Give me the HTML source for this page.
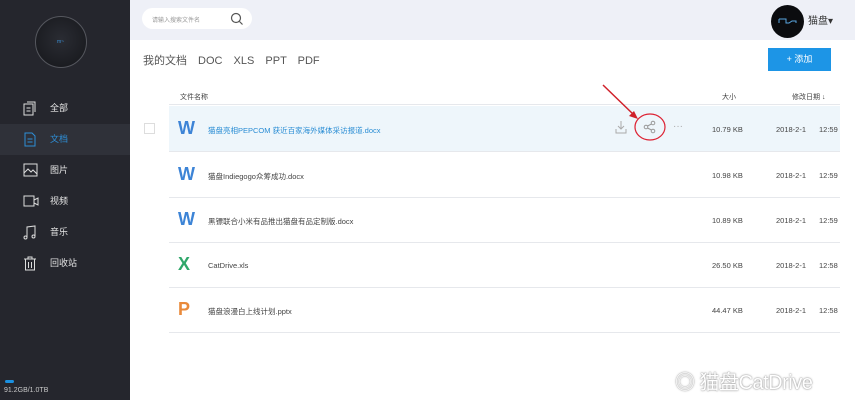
<!DOCTYPE html>
<html><head><meta charset="utf-8"><style>
*{margin:0;padding:0;box-sizing:border-box}
body{width:855px;height:400px;overflow:hidden;background:#fff;font-family:"Liberation Sans","Noto Sans CJK SC",sans-serif;position:relative}
.side{position:absolute;left:0;top:0;width:130px;height:400px;background:#25262d}
.avatar{position:absolute;left:35px;top:16px;width:52px;height:52px;border-radius:50%;border:1px solid #55575e;background:radial-gradient(circle at 50% 45%,#2a2c33,#15161a)}
.avatar span{position:absolute;left:21px;top:22px;color:#3a8fd6;font-size:5px}
.nav{position:absolute;left:0;width:130px;height:31px;color:#e6e6e6;font-size:9px;line-height:31px}
.nav svg{position:absolute;left:23px;top:8px}
.nav b{position:absolute;left:50px;font-weight:normal}
.nav.act{background:#2f3139;color:#2e8fd8}
.bar{position:absolute;left:5px;top:380px;width:9px;height:3px;background:#1a90e0;border-radius:2px}
.quota{position:absolute;left:4px;top:387px;color:#c8c8c8;font-size:7px}
.top{position:absolute;left:130px;top:0;width:725px;height:40px;background:#eef0f7}
.search{position:absolute;left:12px;top:8px;width:110px;height:21px;background:#fff;border-radius:11px;font-size:6px;color:#999;padding:7px 0 0 10px}
.uav{position:absolute;left:641px;top:5px;width:33px;height:33px;border-radius:50%;background:#0b0c0f}
.uname{position:absolute;left:678px;top:12px;font-size:10px;color:#333}
.tabs{position:absolute;left:143px;top:52px;font-size:11px;color:#555;word-spacing:8px}
.add{position:absolute;left:768px;top:48px;width:63px;height:23px;background:#1d95e6;color:#fff;font-size:9px;text-align:center;line-height:23px}
.hd{position:absolute;top:92px;font-size:7px;color:#444}
.row{position:absolute;left:169px;width:671px;height:46px;border-bottom:1px solid #e6e8ec;font-size:7.5px;color:#444}
.row.hl{background:#eef6fb}
.row .ic{position:absolute;left:9px;top:12px;font-size:18px;font-weight:bold}
.row .nm{position:absolute;left:39px;top:19px}
.row .sz{position:absolute;left:543px;top:19px}
.row .dt{position:absolute;left:607px;top:19px}
.row .tm{position:absolute;left:650px;top:19px}
.wm{position:absolute;left:675px;top:366px;font-size:20px;color:#fff;text-shadow:0 0 2px #999,0 0 1px #888;letter-spacing:-0.5px}
</style></head><body>
<div class="side">
<div class="avatar"><span>m~</span></div>
<div class="nav" style="top:93px"><svg width="14" height="15" fill="none" stroke="#ddd"><rect x="1" y="3" width="9" height="11"/><path d="M4 1h8v10"/><path d="M3.5 7h4M3.5 10h4"/></svg><b>全部</b></div>
<div class="nav act" style="top:124px"><svg width="14" height="15" fill="none" stroke="#2e8fd8"><path d="M2 1h7l3 3v10H2z"/><path d="M4.5 7h5M4.5 10h5"/></svg><b>文档</b></div>
<div class="nav" style="top:155px"><svg width="15" height="14" fill="none" stroke="#ddd"><rect x="1" y="1" width="13" height="12"/><path d="M1 10l4-4 3 3 2-2 4 4"/></svg><b>图片</b></div>
<div class="nav" style="top:186px"><svg width="16" height="14" fill="none" stroke="#ddd"><rect x="1" y="2" width="10" height="10"/><path d="M11 6l4-2v7l-4-2"/></svg><b>视频</b></div>
<div class="nav" style="top:217px"><svg width="14" height="15" fill="none" stroke="#ddd"><path d="M4 12V2l8-1v10"/><circle cx="2.5" cy="12.5" r="1.5"/><circle cx="10.5" cy="11.5" r="1.5"/></svg><b>音乐</b></div>
<div class="nav" style="top:248px"><svg width="14" height="15" fill="none" stroke="#ddd"><path d="M1 3h12M5 3V1h4v2M2.5 3v11h9V3M5.5 6v6M8.5 6v6"/></svg><b>回收站</b></div>
<div class="bar"></div><div class="quota">91.2GB/1.0TB</div>
</div>
<div class="top"><div class="search">请输入搜索文件名<svg style="position:absolute;left:88px;top:4px" width="13" height="13" fill="none" stroke="#555" stroke-width="1.2"><circle cx="6" cy="6" r="4.5"/><path d="M9.5 9.5l3 3"/></svg></div>
<div class="uav"><svg width="33" height="33" fill="none" stroke="#5aa6e0"><path d="M8 14v4M8 14h7v4h3l3 -2h4v2"/></svg></div><div class="uname">猫盘▾</div></div>
<div class="tabs">我的文档 DOC XLS PPT PDF</div>
<div class="add">+ 添加</div>
<div class="hd" style="left:180px">文件名称</div><div class="hd" style="left:722px">大小</div><div class="hd" style="left:792px">修改日期 ↓</div>
<div style="position:absolute;left:169px;top:104px;width:671px;border-top:1px solid #e6e8ec"></div>
<div class="row hl" style="top:106px"><div style="position:absolute;left:-25px;top:17px;width:11px;height:11px;border:1px solid #ddd;background:#fff"></div><div class="ic" style="color:#3d84d6">W</div><div class="nm" style="color:#2a8dd4">猫盘亮相PEPCOM 获近百家海外媒体采访报道.docx</div>
<svg style="position:absolute;left:446px;top:14px" width="12" height="14" fill="none" stroke="#aaa"><path d="M6 1v8M3 6l3 3 3-3M1 9v4h10V9"/></svg>
<svg style="position:absolute;left:464px;top:6px" width="34" height="30" fill="none"><ellipse cx="17" cy="15" rx="15" ry="13" stroke="#d23" stroke-width="1.2"/><circle cx="13" cy="15" r="1.8" stroke="#999"/><circle cx="20" cy="11" r="1.8" stroke="#999"/><circle cx="20" cy="19" r="1.8" stroke="#999"/><path d="M14.5 14l4-2M14.5 16l4 2" stroke="#999"/></svg>
<div style="position:absolute;left:504px;top:15px;color:#aaa;font-size:10px">···</div>
<div class="sz">10.79 KB</div><div class="dt">2018-2-1</div><div class="tm">12:59</div></div>
<svg style="position:absolute;left:600px;top:82px" width="40" height="40"><path d="M3 3L34 33" stroke="#d0202a" stroke-width="1.5"/><path d="M38 37l-9-3 5-5z" fill="#d0202a"/></svg>
<div class="row" style="top:152px"><div class="ic" style="color:#3d84d6">W</div><div class="nm">猫盘Indiegogo众筹成功.docx</div><div class="sz">10.98 KB</div><div class="dt">2018-2-1</div><div class="tm">12:59</div></div>
<div class="row" style="top:197px"><div class="ic" style="color:#3d84d6">W</div><div class="nm">黑镖联合小米有品推出猫盘有品定制版.docx</div><div class="sz">10.89 KB</div><div class="dt">2018-2-1</div><div class="tm">12:59</div></div>
<div class="row" style="top:242px"><div class="ic" style="color:#2fa76a">X</div><div class="nm">CatDrive.xls</div><div class="sz">26.50 KB</div><div class="dt">2018-2-1</div><div class="tm">12:58</div></div>
<div class="row" style="top:287px"><div class="ic" style="color:#e98a3b">P</div><div class="nm">猫盘浪漫白上线计划.pptx</div><div class="sz">44.47 KB</div><div class="dt">2018-2-1</div><div class="tm">12:58</div></div>
<div class="wm">◎ 猫盘CatDrive</div>
</body></html>
